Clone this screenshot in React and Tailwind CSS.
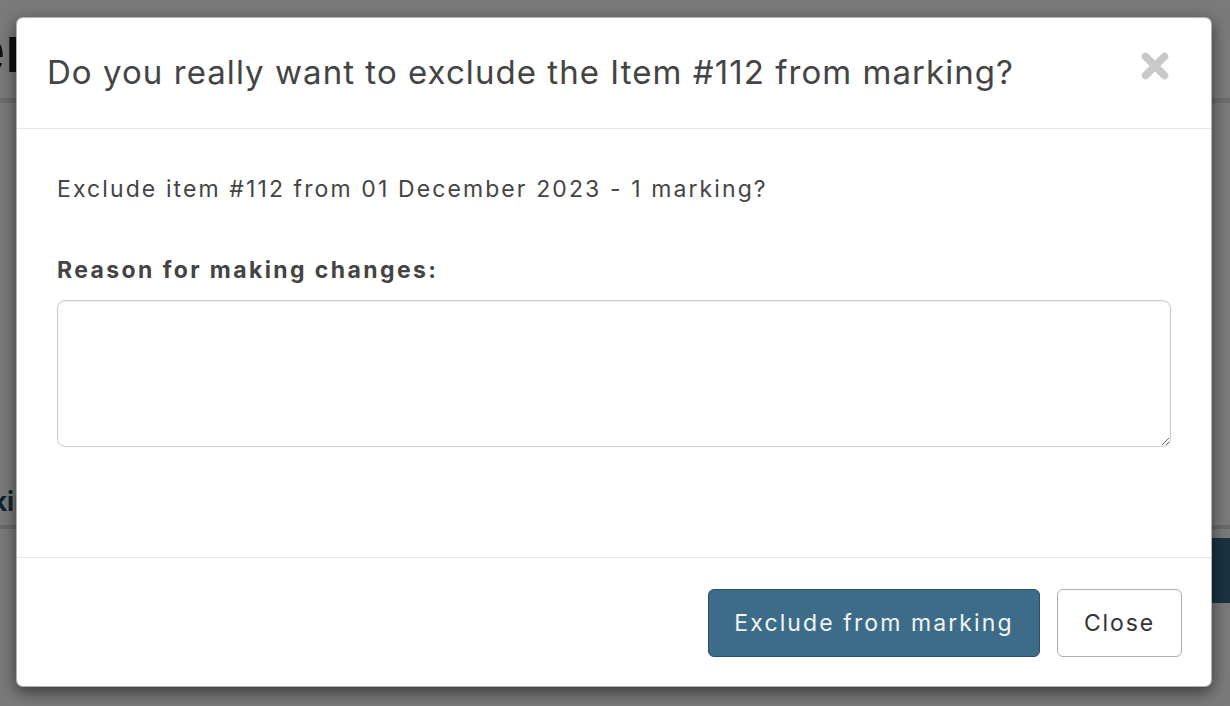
import React from 'react';

const font = { fontFamily: 'Inter, "Noto Sans", sans-serif' };

const CloseIcon = () => (
  <svg width="32" height="32" viewBox="0 0 32 32" aria-hidden="true">
    <path d="M6.5 6.5 L25.5 25.5 M25.5 6.5 L6.5 25.5" stroke="#c9c9c9" strokeWidth="7.5" strokeLinecap="round" />
  </svg>
);

const BackgroundPage = () => (
  <div className="absolute inset-0 bg-white">
    <div className="h-[103px] border-b-[5px] border-[#e2e2e2] flex items-center">
      <h1 className="-ml-[33px] text-[64px] font-bold text-[#222]">em</h1>
    </div>
    <div className="h-[374px]" />
    <div className="h-[52px] border-b-[4px] border-[#dcdcdc] flex items-center">
      <span className="-ml-[8px] text-[26px] font-bold text-[#1f4a63]">king</span>
    </div>
    <div className="flex justify-end pt-[9px]">
      <div className="w-[60px] h-[65px] bg-[#3a6a89]" />
    </div>
  </div>
);

const ExcludeModal = () => (
  <div className="w-[1196px] rounded-[7px] border border-black/30 bg-white shadow-[0_5px_16px_rgba(0,0,0,0.55)]">
    <div className="flex items-center justify-between border-b border-[#e5e5e5] pl-[30px] pr-[40px] h-[111px]">
      <h4 className="text-[33px] font-normal text-[#444] tracking-[1.05px]">
        Do you really want to exclude the Item #112 from marking?
      </h4>
      <button type="button" className="flex items-center justify-center -mt-[14px]">
        <CloseIcon />
      </button>
    </div>
    <div className="px-[40px] pt-[44px] pb-[110px]">
      <p className="text-[23px] leading-[32px] text-[#444] tracking-[2.1px]">
        Exclude item #112 from 01 December 2023 - 1 marking?
      </p>
      <label className="block mt-[49px] text-[23px] leading-[32px] font-bold text-[#444] tracking-[2.4px]">
        Reason for making changes:
      </label>
      <textarea
        className="block mt-[14px] w-full h-[147px] rounded-[8px] border-[1.5px] border-[#cccccc] shadow-[inset_0_1px_2px_rgba(0,0,0,0.08)] outline-none px-3 py-2 text-[22px]"
      />
    </div>
    <div className="flex justify-end gap-[17px] border-t border-[#e5e5e5] pt-[31px] pb-[29px] pr-[29px]">
      <button type="button" className="w-[332px] h-[68px] rounded-[6px] border border-[#2c5068] bg-[#3d6c89] text-[23px] tracking-[2.1px] text-[#f2f4f6]">
        Exclude from marking
      </button>
      <button type="button" className="w-[125px] h-[68px] rounded-[6px] border-[1.5px] border-[#adadad] bg-white text-[23px] tracking-[1.9px] text-[#333]">
        Close
      </button>
    </div>
  </div>
);

export default function App() {
  return (
    <div className="relative w-full h-[706px] overflow-hidden" style={font}>
      <BackgroundPage />
      <div className="absolute inset-0 bg-black/[0.52] pt-[17px] pl-[16px]">
        <ExcludeModal />
      </div>
    </div>
  );
}
